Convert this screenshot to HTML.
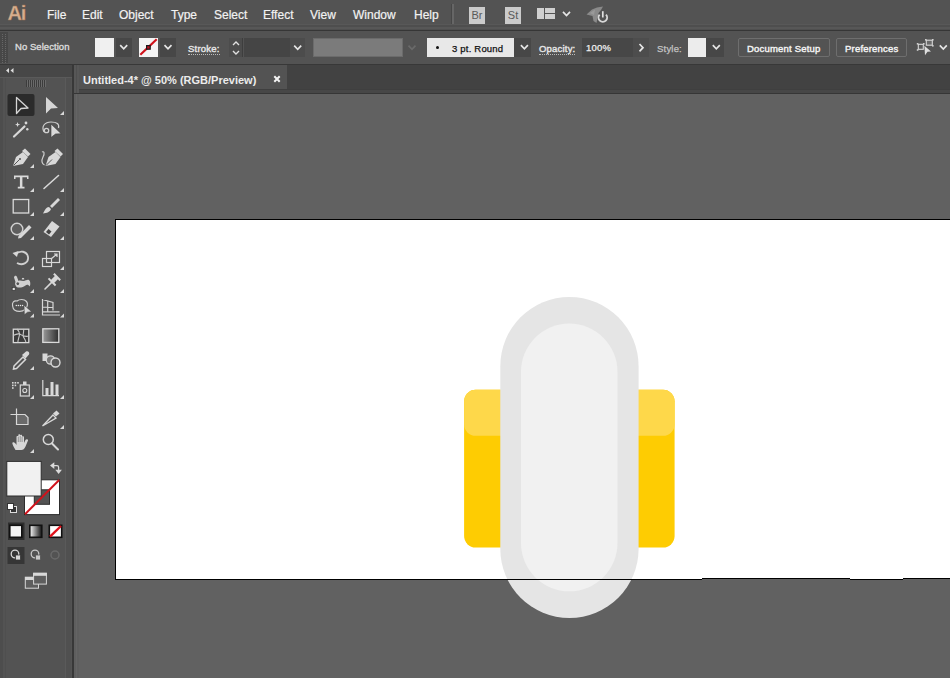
<!DOCTYPE html>
<html><head><meta charset="utf-8">
<style>
*{margin:0;padding:0;box-sizing:border-box}
html,body{width:950px;height:678px;overflow:hidden;background:#535353;font-family:"Liberation Sans",sans-serif;}
.a{position:absolute}
svg{position:absolute;overflow:visible}
#menubar{position:absolute;left:0;top:0;width:950px;height:25px;background:#535353}
#menusep{position:absolute;left:0;top:24px;width:950px;height:7px;background:linear-gradient(#585858 0 1px,#4e4e4e 1px 3px,#575757 3px 5px,#4f4f4f 5px 6px,#363636 6px 7px)}
.m{position:absolute;top:8px;font-size:12px;color:#f2f2f2;line-height:14px;-webkit-text-stroke:0.2px currentColor}
#ctrl{position:absolute;left:0;top:31px;width:950px;height:32px;background:#535353}
#ctrlline{position:absolute;left:0;top:64px;width:950px;height:1px;background:#383838}
.lbl{position:absolute;font-size:9.5px;letter-spacing:0.2px;color:#e6e6e6;line-height:12px;top:42px;-webkit-text-stroke:0.25px currentColor}
.dd{position:absolute;top:38px;height:19px;background:#474747}
.chev{position:absolute;width:5px;height:5px;border-right:2px solid #e8e8e8;border-bottom:2px solid #e8e8e8;transform:rotate(45deg)}
#tabbar{position:absolute;left:74px;top:65px;width:876px;height:29px;background:#424242}
#tabline{position:absolute;left:74px;top:93px;width:876px;height:1px;background:#363636}
#tab{position:absolute;left:75px;top:65px;width:212px;height:24px;background:#535353}
#canvas{position:absolute;left:74px;top:94px;width:876px;height:584px;background:#616161}
#tools{position:absolute;left:0;top:65px;width:72px;height:614px;background:#535353}
#toolsedge{position:absolute;left:72px;top:65px;width:2px;height:614px;background:#383838}
#toolhead{position:absolute;left:0;top:65px;width:72px;height:13px;background:#474747;border-bottom:1px solid #5a5a5a}
#artboard{position:absolute;left:115px;top:219px;width:840px;height:361px;background:#fff;border:1px solid #000}
.tri{position:absolute;width:0;height:0;border-left:4px solid transparent;border-bottom:4px solid #d8d8d8}
</style></head><body>
<div id="menubar">
  <div class="a" style="left:7.5px;top:2px;font-size:20px;line-height:22px;color:#d6ae8e;font-weight:bold;-webkit-text-stroke:0.3px #9c7050;letter-spacing:-1.2px">Ai</div>
  <div class="m" style="left:47px">File</div>
  <div class="m" style="left:82px">Edit</div>
  <div class="m" style="left:119px">Object</div>
  <div class="m" style="left:171px">Type</div>
  <div class="m" style="left:214px">Select</div>
  <div class="m" style="left:263px">Effect</div>
  <div class="m" style="left:310px">View</div>
  <div class="m" style="left:353px">Window</div>
  <div class="m" style="left:414px">Help</div>
  <div class="a" style="left:451px;top:4px;width:1px;height:20px;background:#474747"></div><div class="a" style="left:452px;top:4px;width:2px;height:20px;background:#666"></div>
  <div class="a" style="left:469px;top:7px;width:16px;height:16.5px;background:#cbcbcb;color:#595959;font-size:11px;line-height:17px;text-align:center">Br</div>
  <div class="a" style="left:505px;top:7px;width:16px;height:16.5px;background:#cbcbcb;color:#595959;font-size:11px;line-height:17px;text-align:center">St</div>
  <div class="a" style="left:537px;top:8px;width:7px;height:11px;background:#d0d0d0"></div>
  <div class="a" style="left:545px;top:8px;width:10px;height:5px;background:#d0d0d0"></div>
  <div class="a" style="left:545px;top:14px;width:10px;height:5px;background:#d0d0d0"></div>
  <svg style="left:0;top:0" width="620" height="30">
    <path d="M586.5 14.5 L592 9.5 L597 7.5 L603 6.5 L601 10 L598.5 13 L597.5 18 L596.5 23 L593.5 21 L592.5 16 Z" fill="#8a8a8a"/>
    <path d="M590 13 L595 9.5 L594 15" fill="#9a9a9a"/>
    <circle cx="602.8" cy="18" r="5.2" fill="#535353"/>
    <path d="M599.6 14.6 A4.3 4.3 0 1 0 606 14.6" fill="none" stroke="#d8d8d8" stroke-width="1.9"/>
    <path d="M602.8 11 V17.5" stroke="#535353" stroke-width="3.2"/>
    <path d="M602.8 11.2 V17.5" stroke="#e0e0e0" stroke-width="1.7"/>
  </svg>
</div>
<div id="menusep"></div>
<div id="ctrl">
  <div class="a" style="left:0;top:1px;width:8px;height:31px;background:#474747"></div><svg style="left:0;top:0" width="10" height="34"><rect x="2" y="3" width="1" height="1" fill="#666"/><rect x="5" y="3" width="1" height="1" fill="#666"/><rect x="2" y="5" width="1" height="1" fill="#666"/><rect x="5" y="5" width="1" height="1" fill="#666"/><rect x="2" y="7" width="1" height="1" fill="#666"/><rect x="5" y="7" width="1" height="1" fill="#666"/><rect x="2" y="9" width="1" height="1" fill="#666"/><rect x="5" y="9" width="1" height="1" fill="#666"/><rect x="2" y="11" width="1" height="1" fill="#666"/><rect x="5" y="11" width="1" height="1" fill="#666"/><rect x="2" y="13" width="1" height="1" fill="#666"/><rect x="5" y="13" width="1" height="1" fill="#666"/><rect x="2" y="15" width="1" height="1" fill="#666"/><rect x="5" y="15" width="1" height="1" fill="#666"/><rect x="2" y="17" width="1" height="1" fill="#666"/><rect x="5" y="17" width="1" height="1" fill="#666"/><rect x="2" y="19" width="1" height="1" fill="#666"/><rect x="5" y="19" width="1" height="1" fill="#666"/><rect x="2" y="21" width="1" height="1" fill="#666"/><rect x="5" y="21" width="1" height="1" fill="#666"/><rect x="2" y="23" width="1" height="1" fill="#666"/><rect x="5" y="23" width="1" height="1" fill="#666"/><rect x="2" y="25" width="1" height="1" fill="#666"/><rect x="5" y="25" width="1" height="1" fill="#666"/><rect x="2" y="27" width="1" height="1" fill="#666"/><rect x="5" y="27" width="1" height="1" fill="#666"/><rect x="2" y="29" width="1" height="1" fill="#666"/><rect x="5" y="29" width="1" height="1" fill="#666"/><rect x="2" y="31" width="1" height="1" fill="#666"/><rect x="5" y="31" width="1" height="1" fill="#666"/></svg>
  <div class="lbl" style="left:15px;top:10px;color:#dcdcdc;letter-spacing:0.05px;-webkit-text-stroke:0.35px #dcdcdc">No Selection</div>
    <div class="a" style="left:95px;top:7px;width:19px;height:19px;background:#f0f0f0"></div>
  <div class="dd" style="left:116px;top:7px;width:16px"></div>
  <div class="a" style="left:139px;top:7px;width:19px;height:19px;background:#f4f4f4;overflow:hidden"><svg style="left:0;top:0" width="19" height="19"><line x1="1.3" y1="16.8" x2="17.7" y2="1.3" stroke="#d0121b" stroke-width="2.2"/><rect x="7.6" y="7.6" width="3.6" height="3.6" fill="#c01020" stroke="#1a1a1a" stroke-width="1.2"/></svg></div>
  <div class="dd" style="left:160px;top:7px;width:16px"></div>
  <div class="lbl" style="left:188px;top:12px;border-bottom:1px dotted #bbb;line-height:11px;-webkit-text-stroke:0.4px #e6e6e6">Stroke:</div>
  <div class="dd" style="left:229px;top:7px;width:14px;background:#4c4c4c;border-right:1px solid #3e3e3e"></div>
  <svg style="left:231px;top:9px" width="10" height="16"><path d="M2 5 L5 2 L8 5 M2 11 L5 14 L8 11" fill="none" stroke="#e0e0e0" stroke-width="1.4"/></svg>
  <div class="dd" style="left:244px;top:7px;width:46px;background:#454545"></div>
  <div class="dd" style="left:290px;top:7px;width:15px;background:#4c4c4c"></div>
  <div class="dd" style="left:313px;top:7px;width:90px;background:#7b7b7b;border:1px solid #6b6b6b"></div>
  <div class="dd" style="left:427px;top:7px;width:87px;background:#e8e8e8"></div>
  <div class="a" style="left:436px;top:15px;width:3px;height:3px;border-radius:50%;background:#111"></div>
  <div class="lbl" style="left:452px;top:12px;color:#111">3 pt. Round</div>
  <div class="dd" style="left:514px;top:7px;width:17px;background:#474747"></div>
  <div class="lbl" style="left:539px;top:12px;border-bottom:1px dotted #bbb;line-height:11px;-webkit-text-stroke:0.4px #e6e6e6">Opacity:</div>
  <div class="dd" style="left:582px;top:7px;width:51px;background:#474747"></div>
  <div class="lbl" style="left:586px;top:11px;color:#f0f0f0">100%</div>
  <div class="dd" style="left:633px;top:7px;width:16px;background:#4d4d4d"></div>
  <div class="lbl" style="left:657px;top:12px;color:#c4c4c4">Style:</div>
  <div class="a" style="left:688px;top:7px;width:18px;height:19px;background:#ececec"></div>
  <div class="dd" style="left:706px;top:7px;width:18px;background:#474747"></div>
  <div class="a" style="left:738px;top:7px;width:92px;height:19px;border:1px solid #6e6e6e;border-radius:2px"></div>
  <div class="lbl" style="left:747px;top:11.5px;color:#f4f4f4;-webkit-text-stroke:0.4px #f4f4f4">Document Setup</div>
  <div class="a" style="left:836px;top:7px;width:71px;height:19px;border:1px solid #6e6e6e;border-radius:2px"></div>
  <div class="lbl" style="left:845px;top:11.5px;color:#f4f4f4;-webkit-text-stroke:0.4px #f4f4f4">Preferences</div>
  <svg style="left:0;top:-31px" width="950" height="64">
   <rect x="918.3" y="44.3" width="5" height="5" fill="#5a5a5a" stroke="#d8d8d8" stroke-width="1.1"/>
   <rect x="926.3" y="40.2" width="6" height="5" fill="#6a6a6a" stroke="#d8d8d8" stroke-width="1.1"/>
   <g fill="#cfcfcf"><rect x="916.8" y="43" width="1.6" height="1.6"/><rect x="923" y="43" width="1.6" height="1.6"/><rect x="916.8" y="49.2" width="1.6" height="1.6"/><rect x="925" y="39" width="1.6" height="1.6"/><rect x="932" y="39" width="1.6" height="1.6"/><rect x="932" y="45" width="1.6" height="1.6"/></g>
   <path d="M924.4 45.8 L931 51.5 L927.5 51.8 L925 55.3 Z" fill="#dedede"/>
  </svg>
</div>
<svg style="left:0;top:0" width="950" height="70" viewBox="0 0 950 70"><path d="M120.2 45.2 L123.7 48.8 L127.2 45.2" fill="none" stroke="#e6e6e6" stroke-width="1.7"/><path d="M164.5 45.2 L168 48.8 L171.5 45.2" fill="none" stroke="#e6e6e6" stroke-width="1.7"/><path d="M294.2 45.7 L297.7 49.3 L301.2 45.7" fill="none" stroke="#e6e6e6" stroke-width="1.7"/><path d="M408.5 45.7 L412 49.3 L415.5 45.7" fill="none" stroke="#6a6a6a" stroke-width="1.7"/><path d="M520.9 45.2 L524.4 48.8 L527.9 45.2" fill="none" stroke="#e6e6e6" stroke-width="1.7"/><path d="M712.8 45.2 L716.3 48.8 L719.8 45.2" fill="none" stroke="#e6e6e6" stroke-width="1.7"/><path d="M939.8 45.400000000000006 L943.3 49.0 L946.8 45.400000000000006" fill="none" stroke="#e6e6e6" stroke-width="1.7"/><path d="M563.0 11.899999999999999 L566.5 15.5 L570.0 11.899999999999999" fill="none" stroke="#e6e6e6" stroke-width="1.7"/><path d="M639.5 44 L643 47.7 L639.5 51.4" fill="none" stroke="#e6e6e6" stroke-width="1.7"/></svg>
<div id="ctrlline"></div>
<div id="tools"></div>
<div class="a" style="left:0;top:78px;width:3px;height:600px;background:#4d4d4d"></div>
<div class="a" style="left:5px;top:78px;width:1px;height:600px;background:#4f4f4f"></div>
<div class="a" style="left:66px;top:78px;width:5px;height:600px;background:#505050"></div>
<div class="a" style="left:65px;top:78px;width:1px;height:600px;background:#5a5a5a"></div>
<div id="toolhead"></div>
<div id="toolsedge"></div>
<svg style="left:0;top:0" width="74" height="678" viewBox="0 0 74 678">
 <g fill="#e0e0e0">
  <path d="M6 70.5 L9 68 L9 73 Z M10.5 70.5 L13.5 68 L13.5 73 Z" fill="#dcdcdc"/>
 </g>
 <g stroke="#3c3c3c" stroke-width="1">
  <path d="M26.5 80 V87 M28.5 80 V87 M30.5 80 V87 M32.5 80 V87 M34.5 80 V87 M36.5 80 V87 M38.5 80 V87 M40.5 80 V87 M42.5 80 V87 M44.5 80 V87"/>
 </g>
 <g stroke="#6a6a6a" stroke-width="1">
  <path d="M27.5 80 V87 M29.5 80 V87 M31.5 80 V87 M33.5 80 V87 M35.5 80 V87 M37.5 80 V87 M39.5 80 V87 M41.5 80 V87 M43.5 80 V87 M45.5 80 V87"/>
 </g>
 <rect x="7.5" y="94" width="27" height="22" rx="2" fill="#2b2b2b"/>
 <!-- selection -->
 <path d="M16.5 97.5 L28 108 L21 108.5 L16.5 113.5 Z" fill="none" stroke="#d6d6d6" stroke-width="1.3" stroke-linejoin="round"/>
 <!-- direct selection -->
 <path d="M46 97 L58 108 L51 108.5 L46 113.5 Z" fill="#d6d6d6"/>
 <g fill="#d8d8d8">
  <path d="M64 111 V115 H60 Z"/>
 </g>
 <!-- magic wand -->
 <path d="M14 136.5 L24.5 126.5" stroke="#d8d8d8" stroke-width="2.2" stroke-linecap="round"/>
 <path d="M17.5 122 L18.3 124 L20.3 124.4 L18.3 125.2 L17.5 127 L16.8 125.2 L15 124.4 L16.8 124 Z" fill="#d8d8d8"/>
 <circle cx="26" cy="123" r="1.4" fill="#d8d8d8"/>
 <circle cx="27.3" cy="129.3" r="1.2" fill="#d8d8d8"/>
 <!-- lasso -->
 <path d="M44 132 C41 126 45 122 51 122 C57 122 59.5 124 58.5 128" fill="none" stroke="#d0d0d0" stroke-width="1.2"/>
 <circle cx="46.5" cy="130.5" r="2.2" fill="none" stroke="#d0d0d0" stroke-width="1.3"/>
 <path d="M51 124 L61.2 133.7 L55.5 134 L51 137.5 Z" fill="#d8d8d8" stroke="#3a3a3a" stroke-width="0.6"/>
 <!-- pen -->
 <path d="M13 166 L16 157 L23 152 L28 157 L23 164 Z" fill="#d8d8d8"/>
 <path d="M22 151 L25 148.5 L30.5 154 L28 156.5 Z" fill="#d8d8d8"/>
 <path d="M13.5 165.5 L19.5 159.5" stroke="#555" stroke-width="1"/>
 <circle cx="20" cy="159" r="1" fill="#555"/>
 <path d="M34 164 V168 H30 Z" fill="#d8d8d8"/>
 <!-- curvature pen -->
 <path d="M42 152 C44 151 45 153 43 157 C41 161 42 164 44.5 165" fill="none" stroke="#d0d0d0" stroke-width="1.2"/>
 <path d="M45.5 166 L48.5 157 L55.5 152 L60.5 157 L55.5 164 Z" fill="#d8d8d8"/>
 <path d="M54.5 151 L57.5 148.5 L63 154 L60.5 156.5 Z" fill="#d8d8d8"/>
 <path d="M46 165.5 L52 159.5" stroke="#555" stroke-width="1"/>
 <!-- type -->
 <path d="M14 175.5 H28.5 V179 H27 V177.2 H22.4 V186.8 H24.5 V188.5 H17.8 V186.8 H19.9 V177.2 H15.5 V179 H14 Z" fill="#dadada"/>
 <path d="M34 188 V192 H30 Z" fill="#d8d8d8"/>
 <!-- line -->
 <path d="M44 188.5 L58.5 175.5" stroke="#d8d8d8" stroke-width="1.6" stroke-linecap="round"/>
 <path d="M64 188 V192 H60 Z" fill="#d8d8d8"/>
 <!-- rectangle -->
 <rect x="13.2" y="199.5" width="15.5" height="13.5" fill="#5a5a5a" stroke="#dadada" stroke-width="1.3"/>
 <path d="M34 212 V216 H30 Z" fill="#d8d8d8"/>
 <!-- paintbrush -->
 <path d="M50 206 L58 198 L60 200 L52 208 Z" fill="#d8d8d8"/>
 <path d="M49 207 C46 207 45 210 43 213.5 C47 213 50 212 51 209 Z" fill="#d8d8d8"/>
 <path d="M64 212 V216 H60 Z" fill="#d8d8d8"/>
 <!-- shaper -->
 <circle cx="17" cy="229" r="5.8" fill="#5e5e5e" stroke="#d0d0d0" stroke-width="1.4"/>
 <path d="M18.5 236 L29 225 L31.5 227.5 L21 238 L18 238.5 Z" fill="#d8d8d8"/>
 <path d="M34 236 V240 H30 Z" fill="#d8d8d8"/>
 <!-- eraser -->
 <path d="M43.5 232 L52 221 L59.5 226.5 L51 237 Z" fill="#d8d8d8"/>
 <path d="M46 232 L48.5 229 L51.5 231.5 L49 234.5 Z" fill="#444"/>
 <path d="M64 236 V240 H60 Z" fill="#d8d8d8"/>
 <!-- rotate -->
 <path d="M16 254 C20 250 27 251 28 257 C29 263 22 266 17 263" fill="none" stroke="#d0d0d0" stroke-width="1.8"/>
 <path d="M12.5 253 L18.5 251 L17 257 Z" fill="#d8d8d8"/>
 <path d="M34 266 V270 H30 Z" fill="#d8d8d8"/>
 <!-- scale -->
 <rect x="46.5" y="251.5" width="13" height="11" fill="none" stroke="#d8d8d8" stroke-width="1.2"/>
 <rect x="42.5" y="258.5" width="9" height="8" fill="none" stroke="#d8d8d8" stroke-width="1.2"/>
 <path d="M51 259 L57 254 M54 254 H57 V257" fill="none" stroke="#d8d8d8" stroke-width="1.2"/>
 <path d="M64 266 V270 H60 Z" fill="#d8d8d8"/>
 <!-- puppet warp -->
 <path d="M14 277.5 C14.3 275.3 16.7 275.3 17.2 277.5 L18.5 281 C20 279.8 22 281.2 24 281 C26 280.3 27.5 279.2 29 280 C30.6 281.5 30.6 284.3 29.8 286.5 C28.5 284.8 27 284.3 25.5 285.5 C24 287 21 287.8 18 287.5 C15.5 287 14.8 284 15.5 282 Z" fill="#d0d0d0"/>
 <circle cx="17.8" cy="283.7" r="1.9" fill="#555" stroke="#e0e0e0" stroke-width="0.9"/>
 <circle cx="23" cy="278.7" r="1.5" fill="#d0d0d0" stroke="#444" stroke-width="0.8"/>
 <rect x="12.2" y="287.4" width="3" height="3" fill="#e0e0e0" stroke="#333" stroke-width="0.7"/>
 <path d="M34 289 V293 H30 Z" fill="#d8d8d8"/>
 <!-- pin -->
 <path d="M60.9 279.4 L54.6 273.1 L53.1 274.5 L54.8 276.1 L51.2 279.7 L49.3 277.7 L47.8 279.1 L54.9 286.2 L56.3 284.7 L54.3 282.8 L57.9 279.2 L59.5 280.9 Z" fill="#d8d8d8"/>
 <path d="M51.4 282.6 L45.0 289.0" stroke="#d8d8d8" stroke-width="1.6" stroke-linecap="round"/>
 <path d="M64 289 V293 H60 Z" fill="#d8d8d8"/>
 <!-- shape builder -->
 <path d="M12.6 306 C11.8 302 14 300.5 17 301 C19.5 299 24 298.8 26.5 301.5 C28.3 303.5 27.5 307 25 309.5 C22 312 17.5 312 14.5 310 C13.3 309 12.8 307.5 12.6 306 Z" fill="none" stroke="#d0d0d0" stroke-width="1.2"/>
 <g fill="#e8e8e8"><circle cx="16.3" cy="305.5" r="0.75"/><circle cx="18.4" cy="305.5" r="0.75"/><circle cx="20.5" cy="305.5" r="0.75"/><circle cx="22.6" cy="305.5" r="0.75"/></g>
 <path d="M24 305.2 L31.7 311.7 L27.5 312.2 L24.4 314.8 Z" fill="#d8d8d8" stroke="#3c3c3c" stroke-width="0.5"/>
 <path d="M34 313.5 V317.5 H30 Z" fill="#d8d8d8"/>
 <!-- perspective grid -->
 <path d="M42.5 299 V315.5 M42.5 299.5 L53 302.5 V310.5 M47.7 301 V311.5 M42.5 307 L53 307.5 M42.5 311.8 H59.5 M42.5 315 H60" fill="none" stroke="#d6d6d6" stroke-width="1.2"/>
 <path d="M64 313.5 V317.5 H60 Z" fill="#d8d8d8"/>
 <!-- mesh -->
 <rect x="13.3" y="329.2" width="15.5" height="13.4" fill="#3c3c3c" stroke="#dadada" stroke-width="1.3"/>
 <path d="M13 335.5 C16 334 18 333.5 19.5 334 C22 335 24 337.5 29 336 M17 329 C19 331 19.5 333 19.5 334 C19.5 337 17.5 340 18 342.5 M23.5 329 C24.5 332 22 335 23.5 337 C24.5 339 25.5 340 26 342.5" fill="none" stroke="#c8c8c8" stroke-width="1.1"/>
 <!-- gradient -->
 <defs><linearGradient id="gr" x1="0" x2="1"><stop offset="0" stop-color="#9a9a9a"/><stop offset="1" stop-color="#2e2e2e"/></linearGradient>
 <linearGradient id="gr2" x1="0" x2="1"><stop offset="0" stop-color="#fafafa"/><stop offset="1" stop-color="#111"/></linearGradient></defs>
 <rect x="42.8" y="328.8" width="16" height="13.6" fill="url(#gr)" stroke="#dadada" stroke-width="1.3"/>
 <!-- eyedropper -->
 <path d="M14 366 L23 357 L25.5 359.5 L16.5 368.5 L13.5 369 Z" fill="none" stroke="#d8d8d8" stroke-width="1.5"/>
 <path d="M22 355 L26 351.5 C28 350.5 30 352.5 29 354.5 L25.5 358.5 Z" fill="#d8d8d8"/>
 <path d="M34 366 V370 H30 Z" fill="#d8d8d8"/>
 <!-- blend -->
 <rect x="42.5" y="353.5" width="5" height="7.5" fill="#d8d8d8"/>
 <circle cx="50.5" cy="360" r="4.2" fill="#777" stroke="#d8d8d8" stroke-width="1.3"/>
 <circle cx="55.5" cy="362.5" r="4.5" fill="#5a5a5a" stroke="#d8d8d8" stroke-width="1.4"/>
 <!-- symbol sprayer -->
 <g fill="#d8d8d8"><rect x="12" y="382" width="1.6" height="1.6"/><rect x="14.6" y="382" width="1.6" height="1.6"/><rect x="17.2" y="382" width="1.6" height="1.6"/><rect x="12" y="384.6" width="1.6" height="1.6"/><rect x="14.6" y="384.6" width="1.6" height="1.6"/><rect x="12" y="387.2" width="1.6" height="1.6"/></g>
 <rect x="20.3" y="385" width="9" height="11" fill="none" stroke="#d8d8d8" stroke-width="1.2"/>
 <rect x="23" y="381.5" width="3.5" height="3.5" fill="#d8d8d8"/>
 <circle cx="24.8" cy="390.5" r="2" fill="none" stroke="#d8d8d8" stroke-width="1.1"/>
 <path d="M34 395 V399 H30 Z" fill="#d8d8d8"/>
 <!-- graph -->
 <path d="M42.8 380 V395.6 H59" fill="none" stroke="#d8d8d8" stroke-width="1.2"/>
 <rect x="45.5" y="388" width="3" height="7" fill="#d8d8d8"/>
 <rect x="50.5" y="382" width="3" height="13" fill="#d8d8d8"/>
 <rect x="55.5" y="384.5" width="3" height="10.5" fill="#d8d8d8"/>
 <path d="M64 395 V399 H60 Z" fill="#d8d8d8"/>
 <!-- artboard -->
 <path d="M10.5 414.5 H16 M16.5 408.5 V414" stroke="#d8d8d8" stroke-width="1.2"/>
 <path d="M16.5 414.5 H25 L28 417.5 V424.5 H16.5 Z" fill="#6a6a6a" stroke="#d8d8d8" stroke-width="1.2"/>
 <!-- slice -->
 <path d="M42.5 426 L53 415 L56 418 Z" fill="none" stroke="#d8d8d8" stroke-width="1.3"/>
 <path d="M53 413.5 L56.5 410.5 L59.5 413.5 L56 416.5 Z" fill="#d8d8d8"/>
 <path d="M64 425 V429 H60 Z" fill="#d8d8d8"/>
 <!-- hand -->
 <path d="M15.5 450 C14 447 12.5 445 12.3 443 C12.5 441.8 14 441.8 15.5 443.5 L16.5 445 V437 C16.5 435.6 18.3 435.6 18.3 437 V442 V435.2 C18.3 433.8 20.2 433.8 20.2 435.2 V442 V435.8 C20.2 434.4 22.1 434.4 22.1 435.8 V442 V437.4 C22.1 436 24 436 24 437.4 V443 L25.6 439.8 C26.4 438.6 28.4 439.2 28 440.6 L25.5 446.5 C24.5 449 23 450 21.5 450 Z" fill="#d8d8d8"/>
 <path d="M18.3 437 V442 M20.2 436 V442 M22.1 437 V442" stroke="#535353" stroke-width="0.5"/>
 <path d="M34 449 V453 H30 Z" fill="#d8d8d8"/>
 <!-- zoom -->
 <circle cx="48.3" cy="439.5" r="5" fill="none" stroke="#d8d8d8" stroke-width="1.5"/>
 <path d="M52 443.5 L58 449.5" stroke="#d8d8d8" stroke-width="2" stroke-linecap="round"/>
 <!-- fill/stroke swatches -->
 <rect x="24.5" y="479.8" width="35" height="34.8" fill="#fff" stroke="#2d2d2d" stroke-width="1"/>
 <rect x="34.3" y="489.8" width="15.2" height="14.5" fill="#535353" stroke="#2d2d2d" stroke-width="1"/>
 <path d="M25 514.2 L59.2 480" stroke="#d0121b" stroke-width="2"/>
 <rect x="6.8" y="461.4" width="34.4" height="34.6" fill="#f1f1f1" stroke="#2d2d2d" stroke-width="1"/>
 <!-- swap -->
 <path d="M52 465.6 H57 C58 465.6 58.6 466.2 58.6 467.2 V471" fill="none" stroke="#dadada" stroke-width="1.3"/>
 <path d="M50 465.6 L54.3 462.3 V469 Z M58.6 474 L55.3 469.7 H61.9 Z" fill="#dadada"/>
 <!-- default -->
 <rect x="10.5" y="506.5" width="6" height="6" fill="#333" stroke="#ddd" stroke-width="1"/>
 <rect x="7.5" y="503.5" width="6" height="6" fill="#fff" stroke="#333" stroke-width="1"/>
 <!-- color modes -->
 <rect x="8" y="522.5" width="16.5" height="17.5" fill="#2e2e2e"/>
 <rect x="9.8" y="525.3" width="12" height="12" fill="#f4f4f4" stroke="#111" stroke-width="1.6"/>
 <rect x="29.8" y="525.3" width="12" height="12" fill="url(#gr2)" stroke="#111" stroke-width="1.6"/>
 <rect x="49.3" y="525.3" width="12.4" height="12" fill="#fff" stroke="#111" stroke-width="1.6"/>
 <path d="M50 536.6 L61 526" stroke="#e0121b" stroke-width="2.4"/>
 <!-- drawing modes -->
 <rect x="7.5" y="547" width="17" height="17" fill="#363636"/>
 <circle cx="15" cy="554" r="3.8" fill="none" stroke="#d8d8d8" stroke-width="1.3"/>
 <rect x="15.5" y="555" width="5" height="5" fill="#d8d8d8" stroke="#363636" stroke-width="0.8"/>
 <circle cx="35" cy="554" r="3.8" fill="none" stroke="#c8c8c8" stroke-width="1.3"/>
 <rect x="35.5" y="555" width="5" height="5" fill="#c8c8c8" stroke="#535353" stroke-width="0.8"/>
 <circle cx="55" cy="555" r="4" fill="none" stroke="#6a6a6a" stroke-width="1.5"/>
 <!-- screen mode -->
 <rect x="25.3" y="577.2" width="13.2" height="11" fill="#5e5e5e" stroke="#d8d8d8" stroke-width="1"/>
 <rect x="25" y="577" width="13.8" height="3" fill="#d8d8d8"/>
 <rect x="33.6" y="573.3" width="12.8" height="10.8" fill="#5e5e5e" stroke="#d8d8d8" stroke-width="1"/>
 <rect x="33.1" y="572.8" width="13.8" height="3" fill="#d8d8d8"/>
</svg>
<div id="tabbar"></div>
<div id="tab"></div>
<div class="a" style="left:74px;top:89px;width:876px;height:4px;background:linear-gradient(#3f3f3f 0 1px,#474747 1px)"></div>
<div id="tabline"></div>
<div class="a" style="left:74px;top:65px;width:5px;height:28px;background:#575757"></div>
<div class="a" style="left:76px;top:65px;width:1px;height:28px;background:#4f4f4f"></div>
<div class="a" style="left:83px;top:74px;font-size:11px;font-weight:bold;color:#ececec;line-height:13px">Untitled-4* @ 50% (RGB/Preview)</div>
<svg style="left:0;top:0" width="300" height="100"><path d="M274.3 76.3 L279.7 81.7 M279.7 76.3 L274.3 81.7" stroke="#f4f4f4" stroke-width="2"/></svg>
<div id="canvas"></div>
<div class="a" style="left:74px;top:94px;width:5px;height:584px;background:#5e5e5e"></div>
<div class="a" style="left:76px;top:94px;width:1px;height:584px;background:#646464"></div>
<div id="artboard"></div>
<svg style="left:0;top:0" width="950" height="678" viewBox="0 0 950 678">
 <rect x="464.1" y="389.8" width="210.5" height="157.8" rx="11.5" fill="#fecc02"/>
 <rect x="464.1" y="389.8" width="210.5" height="46" rx="11.5" fill="#fed84a"/>
 <rect x="500.3" y="297" width="138.3" height="321" rx="69.15" fill="#e5e5e5"/>
 <rect x="521" y="323.5" width="96.5" height="267.8" rx="48.25" fill="#f1f1f1"/>
 <rect x="115" y="579" width="587" height="1" fill="#000"/>
 <rect x="702" y="578" width="148" height="1" fill="#000"/><rect x="702" y="579" width="148" height="1" fill="#616161"/>
 <rect x="850" y="579" width="53" height="1" fill="#000"/>
 <rect x="903" y="578" width="47" height="1" fill="#000"/><rect x="903" y="579" width="47" height="1" fill="#616161"/>
</svg>
</body></html>
